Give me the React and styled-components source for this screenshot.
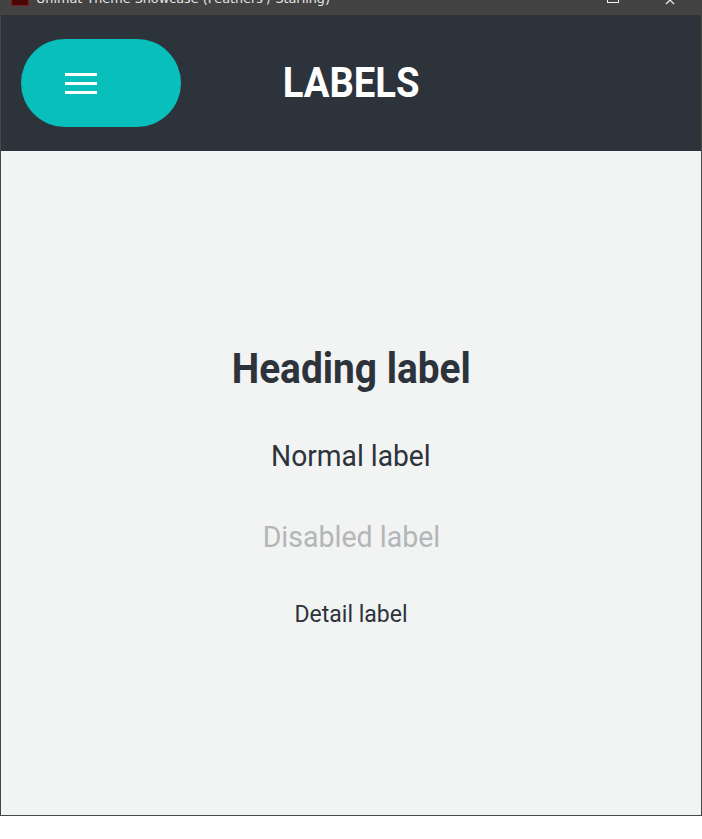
import React from 'react';
import styled, { createGlobalStyle } from 'styled-components';

const GlobalStyle = createGlobalStyle`
  html, body {
    margin: 0;
    padding: 0;
    background: #ffffff;
  }
  * {
    box-sizing: border-box;
  }
`;

const Window = styled.div`
  width: 702px;
  display: flex;
  flex-direction: column;
  border: 1px solid #474747;
  border-top: none;
`;

const TitleBar = styled.div`
  height: 15px;
  background: #434343;
  display: flex;
  align-items: flex-start;
  overflow: hidden;
  padding-left: 11px;
  margin: 0 -1px;
`;

const AppIcon = styled.div`
  width: 18px;
  height: 16px;
  margin-top: -10px;
  background: #4a0505;
  border: 1px solid #7a2020;
`;

const TitleText = styled.div`
  margin: -8px 0 0 7px;
  font-family: 'DejaVu Sans', sans-serif;
  font-size: 12.8px;
  line-height: 14px;
  color: #e8e8e8;
  white-space: nowrap;
  flex: 1;
`;

const WindowButtons = styled.div`
  display: flex;
  align-items: flex-start;
  gap: 46px;
  padding-right: 27px;
`;

const MaxBox = styled.div`
  width: 12px;
  height: 12px;
  margin-top: -9px;
  border: 1px solid #f0f0f0;
`;

const Header = styled.header`
  height: 136px;
  background: #2c333b;
  display: grid;
  grid-template-columns: 1fr auto 1fr;
  align-items: center;
  padding: 0 20px;
`;

const MenuButton = styled.button`
  width: 160px;
  height: 88px;
  border: none;
  border-radius: 44px;
  background: #08bfbb;
  display: flex;
  align-items: center;
  padding: 0 0 0 44px;
  cursor: pointer;
`;

const Burger = styled.div`
  display: flex;
  flex-direction: column;
  gap: 6px;
`;

const BurgerLine = styled.span`
  display: block;
  width: 32px;
  height: 3px;
  background: #ffffff;
`;

const Title = styled.h1`
  margin: 0;
  font-family: Roboto, 'Liberation Sans', sans-serif;
  font-weight: 700;
  font-size: 42px;
  line-height: 1;
  color: #ffffff;
  transform: scaleX(0.91);
`;

const Content = styled.main`
  height: 664px;
  background: #f2f3f3;
  display: flex;
  flex-direction: column;
  align-items: center;
  justify-content: center;
  gap: 51px;
  padding-top: 7px;
`;

const Label = styled.div`
  font-family: Roboto, 'Liberation Sans', sans-serif;
  font-size: ${p => p.size}px;
  font-weight: ${p => (p.bold ? 700 : 400)};
  line-height: 1;
  color: ${p => (p.disabled ? '#b4b6b9' : '#2c333b')};
  transform: scaleX(${p => p.squeeze});
  white-space: nowrap;
`;

export default function App() {
  return (
    <>
      <GlobalStyle />
      <Window>
        <TitleBar>
          <AppIcon />
          <TitleText>Unimat Theme Showcase (Feathers / Starling)</TitleText>
          <WindowButtons>
            <MaxBox />
            <svg width="10" height="6" viewBox="0 0 10 6">
              <path d="M1 -4 L5 0 L9 -4 M1 4 L5 0 L9 4" stroke="#f0f0f0" strokeWidth="1.2" fill="none" />
            </svg>
          </WindowButtons>
        </TitleBar>
        <Header>
          <div>
            <MenuButton aria-label="Menu">
              <Burger>
                <BurgerLine />
                <BurgerLine />
                <BurgerLine />
              </Burger>
            </MenuButton>
          </div>
          <Title>LABELS</Title>
          <div />
        </Header>
        <Content>
          <Label size={42} squeeze={0.925} bold>Heading label</Label>
          <Label size={30} squeeze={0.94}>Normal label</Label>
          <Label size={30} squeeze={0.95} disabled>Disabled label</Label>
          <Label size={23} squeeze={1}>Detail label</Label>
        </Content>
      </Window>
    </>
  );
}
